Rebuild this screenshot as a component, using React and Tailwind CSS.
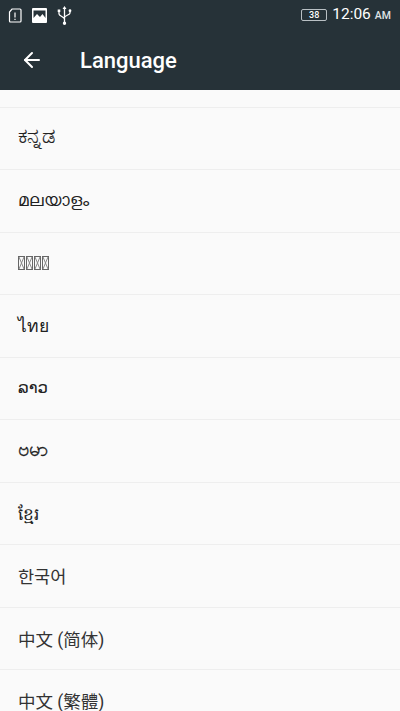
import { ArrowLeft } from 'lucide-react'

// the Sinhala row has no glyphs on the device, it shows tofu boxes
const languages = [
	{ name: 'ಕನ್ನಡ', text: 'text-[21px] pb-[3px] [-webkit-text-stroke:0.2px_#212121]' },
	{ name: 'മലയാളം', text: 'text-[16.500px] pt-[1px]' },
	{ name: 'sinhala', tofu: true },
	{ name: 'ไทย', text: 'text-[17.500px] font-light pt-[1px]' },
	{ name: 'ລາວ', text: 'text-[16.500px] text-[#4a4a4a] pt-[1px]' },
	{ name: 'ဗမာ', text: 'text-[20px] pb-[3px] [-webkit-text-stroke:0.3px_#212121]' },
	{ name: 'ខ្មែរ', text: 'text-[17px] pt-[2px]' },
	{ name: '한국어', text: 'text-[17.500px] text-[#333333] pt-[3px]' },
	{ name: '中文 (简体)', text: 'text-[17.500px] text-[#333333] pt-[3px]' },
	{ name: '中文 (繁體)', text: 'text-[17.500px] text-[#333333] pt-[3px]' },
]

function Tofu() {
	return (
		<svg width="31" height="14" viewBox="0 0 31 14" fill="none" stroke="#666" strokeWidth="1">
			{[0, 8, 16, 24].map((x) => (
				<g key={x} transform={`translate(${x} 0)`}>
					<rect x="0.500" y="0.500" width="6" height="13" />
					<path d="M1 1l5 12M6 1L1 13" stroke="#888" />
				</g>
			))}
		</svg>
	)
}

function StatusBar() {
	return (
		<div className="flex h-[30px] items-center justify-between pl-[8px] pr-[9px]">
			<div className="flex items-center gap-[10px]">
				<svg width="14" height="15" viewBox="0 0 14 15" fill="none" stroke="white" strokeWidth="1.2">
					<path d="M4 1h8a1 1 0 0 1 1 1v11a1 1 0 0 1-1 1H2.500a1 1 0 0 1-1-1V4z" />
					<path d="M7 4.500v5M7 10.800v1.200" />
				</svg>
				<svg width="15" height="15" viewBox="0 0 15 15">
					<path fill="white" d="M1 0h13a1 1 0 0 1 1 1v13a1 1 0 0 1-1 1H1a1 1 0 0 1-1-1V1a1 1 0 0 1 1-1z" />
					<path fill="#263238" d="M1.500 10l3.500-4 3 3 2.500-3 3 4v-7.500h-12zM11 5a1.200 1.200 0 1 0 0-2.400A1.200 1.200 0 0 0 11 5z" />
				</svg>
				<svg width="15" height="19" viewBox="0 0 15 19" fill="none" stroke="white" strokeWidth="1.3">
					<path d="M7.500 2v15M2 5v3c0 2 5.500 3 5.500 5M13 5v2c0 2-5.500 2.500-5.500 4.500" />
					<path fill="white" stroke="none" d="M7.500 0l2 3h-4zM.7 3.500h2.600v2.600H.7zM13 3.300a1.400 1.400 0 1 1 0 2.800 1.400 1.400 0 0 1 0-2.800zM7.500 15.500a1.700 1.700 0 1 1 0 3.400 1.700 1.700 0 0 1 0-3.400z" />
				</svg>
			</div>
			<div className="flex items-center">
				<div className="mr-[5px] flex h-[12px] w-[26px] items-center justify-center rounded-[2px] border border-[#b9c0c4] text-[9px] font-medium leading-none text-white">
					38
				</div>
				<span className="text-[15.500px] text-white">12:06</span>
				<span className="ml-[4px] mt-[2px] text-[10.500px] font-medium text-[#dfe3e5]">AM</span>
			</div>
		</div>
	)
}

function App() {
	return (
		<div
			className="h-[711px] w-[400px] overflow-hidden bg-[#fafafa]"
			style={{ fontFamily: 'Roboto, "Noto Sans CJK KR", "DejaVu Sans", sans-serif' }}>
			<div className="h-[90px] bg-[#263238]">
				<StatusBar />
				<div className="flex h-[60px] items-center pl-[20px]">
					<ArrowLeft size={24} color="white" strokeWidth={2} />
					<h1 className="ml-[36px] text-[22px] font-medium text-white">Language</h1>
				</div>
			</div>
			<div className="h-[17.500px] border-b border-[#eeeeee]" />
			{languages.map((lang) => (
				<div
					key={lang.name}
					className={`flex h-[62.500px] items-center border-b border-[#eeeeee] pl-[18px] text-[#212121] ${lang.text || ''}`}>
					{lang.tofu ? <Tofu /> : lang.name}
				</div>
			))}
		</div>
	)
}

export default App
